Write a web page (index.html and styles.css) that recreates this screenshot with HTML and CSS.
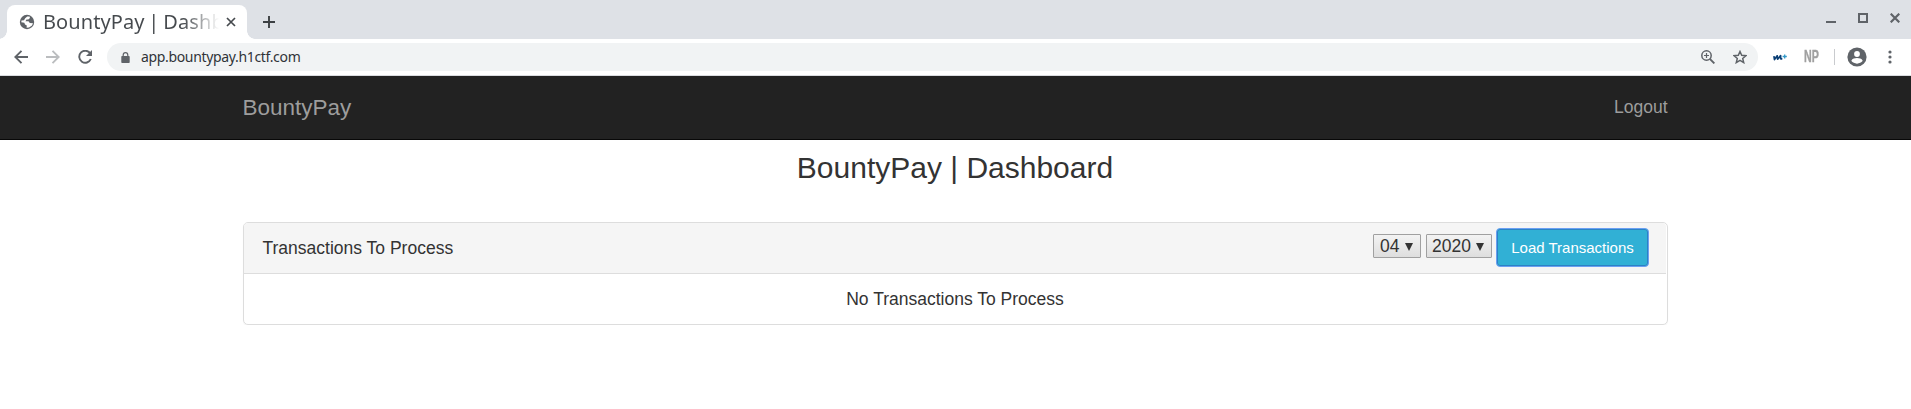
FILE: index.html
```html
<!DOCTYPE html>
<html lang="en">
<head>
<meta charset="utf-8">
<title>BountyPay | Dashboard</title>
<link rel="stylesheet" href="styles.css">
</head>
<body>
<div class="tabstrip">
  <div class="tab">
    <svg class="globe" width="16" height="16" viewBox="0 0 16 16"><circle cx="8" cy="8" r="7.200" fill="#5f6368"/><path d="M8.200 2.400 10.600 2.400 11 4 9.300 5.400 7.500 5.600 6.500 7.200 9.500 7.300 10.800 9 14 9.200 13 11.500 10 13.500 7.600 13.700 7.800 11.400 6 10.500 5.300 8.800 2.300 8.200 2.500 6.500 5 6.300 6.200 4.300z" fill="#fff"/></svg>
    <span class="tab-title">BountyPay | Dashb</span>
    <svg class="tab-close" width="10" height="10" viewBox="0 0 10 10"><path d="M1 1l8 8M9 1L1 9" stroke="#45494d" stroke-width="1.700"/></svg>
  </div>
  <svg class="newtab" width="12" height="12" viewBox="0 0 12 12"><path d="M6 0v12M0 6h12" stroke="#3c4043" stroke-width="1.900"/></svg>
  <div class="window-controls">
    <svg width="10" height="10" viewBox="0 0 10 10"><path d="M0 9h10" stroke="#5f6368" stroke-width="2"/></svg>
    <svg width="10" height="10" viewBox="0 0 10 10"><path d="M1 1h8v8H1z" fill="none" stroke="#5f6368" stroke-width="2"/></svg>
    <svg width="10" height="10" viewBox="0 0 10 10"><path d="M.7.7l8.600 8.600M9.300.7L.7 9.300" stroke="#5f6368" stroke-width="2.200"/></svg>
  </div>
</div>
<div class="toolbar">
  <div class="nav-buttons">
    <svg width="14" height="14" viewBox="0 0 14 14" fill="none" stroke="#5f6368" stroke-width="1.900"><path d="M14 7H1.500M7.500.8L1.300 7l6.200 6.200"/></svg>
    <svg width="14" height="14" viewBox="0 0 14 14" fill="none" stroke="#bbbdbf" stroke-width="1.900"><path d="M0 7h12.500M6.500.8L12.700 7l-6.200 6.200"/></svg>
    <svg width="15" height="14" viewBox="0 0 15 14"><path d="M12.300 3.500A6 6 0 1 0 12.800 9" fill="none" stroke="#5f6368" stroke-width="1.900"/><path d="M14 0v6H8z" fill="#5f6368"/></svg>
  </div>
  <div class="omnibox">
    <svg class="lock" width="9" height="11" viewBox="0 0 9 11"><path d="M2.200 5V3a2.300 2.300 0 0 1 4.600 0v2" fill="none" stroke="#5f6368" stroke-width="1.200"/><rect x=".3" y="4" width="8.400" height="7" rx=".8" fill="#5f6368"/></svg>
    <span class="url">app.bountypay.h1ctf.com</span>
    <svg class="magnifier" width="14" height="14" viewBox="0 0 14 14" fill="none" stroke="#5f6368"><circle cx="5.500" cy="5.500" r="4.700" stroke-width="1.500"/><path d="M8.800 8.800l4.600 4.600" stroke-width="1.900"/><path d="M5.500 3v5M3 5.500h5" stroke-width="1.200"/></svg>
    <svg class="star" width="14" height="14" viewBox="0 0 14 14"><path d="M7 1.500l1.700 3.800 4.200.4-3.200 2.800 1 4.100L7 10.400l-3.700 2.200 1-4.100L1.100 5.700l4.200-.4z" fill="none" stroke="#5f6368" stroke-width="1.500"/></svg>
  </div>
  <svg class="ext-m" width="14" height="7" viewBox="0 0 14 7" fill="none"><path d="M.9 2.200 1.500 5.600 4.200 1.800 4.600 5.200 7.600 1.600 7.700 4.800 9.300 4.900" stroke="#0b3f75" stroke-width="1.700" stroke-linejoin="round"/><path d="M11.700.4v4.200M9.600 2.500h4.200" stroke="#3198c8" stroke-width="1.300"/></svg>
  <span class="ext-np">NP</span>
  <span class="divider"></span>
  <svg class="avatar" width="20" height="20" viewBox="0 0 20 20"><circle cx="10" cy="10" r="9.600" fill="#5f6368"/><circle cx="10" cy="7" r="2.900" fill="#fff"/><path d="M4.300 13.700c1-2 3.500-2.600 5.700-2.600s4.700.6 5.700 2.600A7 7 0 0 1 4.300 13.700z" fill="#fff"/></svg>
  <svg class="menu" width="4" height="14" viewBox="0 0 4 14" fill="#5f6368"><circle cx="2" cy="2" r="1.600"/><circle cx="2" cy="7" r="1.600"/><circle cx="2" cy="12" r="1.600"/></svg>
</div>
<nav class="navbar">
  <div class="container navbar-inner">
    <a class="brand">BountyPay</a>
    <a class="logout">Logout</a>
  </div>
</nav>
<main class="container">
  <h1 class="page-title">BountyPay | Dashboard</h1>
  <section class="panel">
    <header class="panel-heading">
      <span>Transactions To Process</span>
      <div class="filters">
        <span class="select select-month">04<i class="caret"></i></span>
        <span class="select select-year">2020<i class="caret"></i></span>
        <button class="load">Load Transactions</button>
      </div>
    </header>
    <div class="panel-body">No Transactions To Process</div>
  </section>
</main>
</body>
</html>
```
FILE: styles.css
```css
* { box-sizing: border-box; }
body {
  margin: 0;
  background: #fff;
  color: #333;
  font: 17.5px/25px "Liberation Sans", Arial, sans-serif;
}
svg { display: block; flex: none; }

.tabstrip { display: flex; height: 39px; background: #dee1e6; }
.tab {
  position: relative;
  display: flex;
  align-items: center;
  width: 240px;
  height: 34px;
  margin: 5px 0 0 7px;
  padding: 0 12px 0 12px;
  background: #fff;
  border-radius: 8px 8px 0 0;
}
.tab::before, .tab::after {
  content: "";
  position: absolute;
  bottom: 0;
  width: 8px;
  height: 8px;
}
.tab::before { left: -8px; background: radial-gradient(circle at 0 0, #dee1e6 7.5px, #fff 8px); }
.tab::after { right: -8px; background: radial-gradient(circle at 100% 0, #dee1e6 7.5px, #fff 8px); }
.tab-title {
  flex: none;
  width: 176px;
  margin-left: 8px;
  white-space: nowrap;
  font: 20px/30px "Noto Sans", sans-serif;
  letter-spacing: 0.08px;
  word-spacing: -1.4px;
  color: transparent;
  background: linear-gradient(90deg, #45494d 140px, rgba(69, 73, 77, 0) 176px);
  -webkit-background-clip: text;
  background-clip: text;
}
.tab-close { margin-left: 7px; }
.newtab { margin: 16px 0 0 16px; }
.window-controls { display: flex; gap: 22px; margin: 13px 11px 0 auto; }

.toolbar {
  display: flex;
  align-items: center;
  height: 37px;
  border-bottom: 1px solid #dadce0;
}
.nav-buttons { display: flex; gap: 18px; margin-left: 14px; }
.omnibox {
  display: flex;
  flex: none;
  align-items: center;
  width: 1651px;
  height: 28px;
  margin-left: 14px;
  padding: 0 11px 0 14px;
  border-radius: 14px;
  background: #f1f3f4;
}
.url {
  margin-left: 11px;
  font: 14px/20px "Noto Sans", sans-serif;
  letter-spacing: -0.34px;
  color: #303338;
}
.magnifier { margin-left: auto; }
.star { margin-left: 18px; }
.ext-m { margin-left: 15px; }
.ext-np {
  width: 15px;
  margin-left: 17px;
  font: bold 17px/20px "Liberation Sans", sans-serif;
  color: #a0a0a0;
  -webkit-text-stroke: .4px #a0a0a0;
  transform: scaleX(.63);
  transform-origin: 0 50%;
}
.divider { width: 1px; height: 16px; margin-left: 15px; background: #c9cbce; }
.avatar { margin-left: 12px; }
.menu { margin-left: 21px; }

.container { width: 1425px; margin: 0 auto; }
.navbar { height: 64px; background: #222; border-bottom: 1px solid #080808; }
.navbar-inner {
  display: flex;
  align-items: center;
  justify-content: space-between;
  width: 1426px;
  height: 63px;
  padding-right: 1px;
  color: #9d9d9d;
}
.brand { font-size: 22.5px; }

.page-title { margin: 11px 0 38px; padding-right: 1px; font-size: 30px; font-weight: 400; line-height: 33px; text-align: center; }
.panel {
  border: 1px solid #ddd;
  border-radius: 5px;
  box-shadow: 0 1px 1px rgba(0, 0, 0, .05);
}
.panel-heading {
  display: flex;
  align-items: center;
  justify-content: space-between;
  height: 51px;
  margin-right: 1px;
  padding: 0 17px 0 18.5px;
  border-bottom: 1px solid #ddd;
  border-radius: 4px 4px 0 0;
  background: #f5f5f5;
}
.filters { display: flex; align-self: flex-start; padding-top: 5px; }
.select {
  display: flex;
  align-items: center;
  justify-content: space-between;
  height: 24px;
  margin: 6px 5px 0 0;
  padding: 0 7px 0 6px;
  border: 1px solid #a0a0a0;
  border-radius: 1px;
  background: linear-gradient(#f3f3f3, #dedede);
}
.select-month { width: 48px; }
.select-year { width: 66px; margin-right: 4px; padding-left: 5px; }
.caret {
  margin-top: 1px;
  border: solid transparent;
  border-width: 8px 4px 0;
  border-top-color: #333;
}
.load {
  width: 153px;
  height: 39px;
  padding: 0;
  border: 1px solid #6ba0f2;
  border-radius: 4px;
  background: #31b0d5;
  box-shadow: inset 0 0 0 1px #2c82c4;
  color: #fff;
  font: 15px/22px "Liberation Sans", Arial, sans-serif;
}
.panel-body { height: 50px; padding-right: 1px; line-height: 50px; text-align: center; }
```
